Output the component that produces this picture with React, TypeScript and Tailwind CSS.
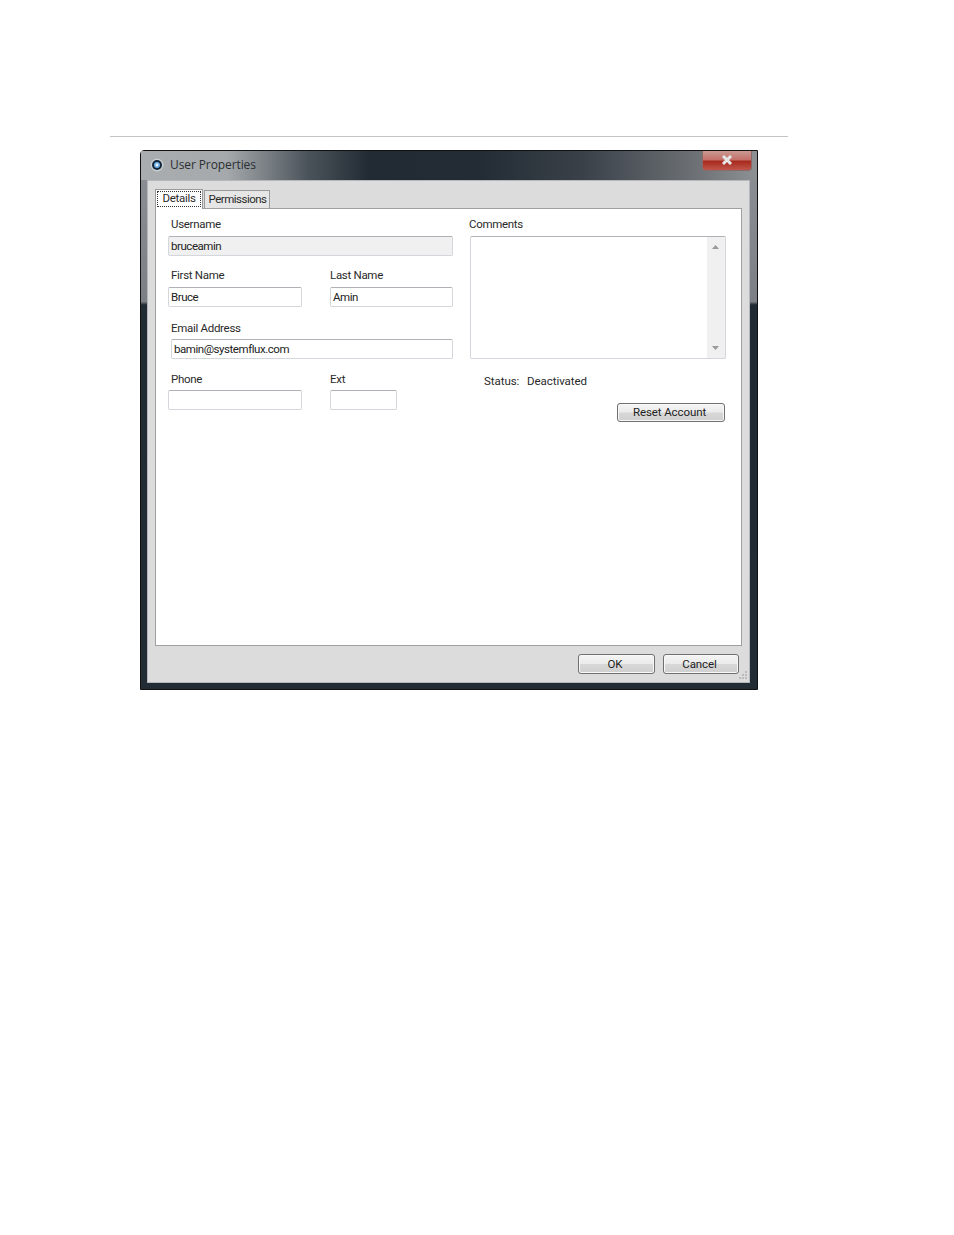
const font = { fontFamily: 'Roboto, "Open Sans", sans-serif' };

function Label({ children, className = '' }: { children: React.ReactNode; className?: string }) {
  return <div className={`h-[14px] text-[11.5px] leading-[14px] tracking-[-0.3px] text-[#2a2a2a] ${className}`}>{children}</div>;
}

function Field({ value = '', className = 'bg-white' }: { value?: string; className?: string }) {
  return (
    <div className={`flex h-[20px] items-center rounded-[2px] border border-[#d3d6da] border-t-[#aeb1b5] pt-[2px] text-[11.5px] tracking-[-0.45px] text-[#222] ${className}`}>
      {value}
    </div>
  );
}

function WinButton({ children, className = '' }: { children: React.ReactNode; className?: string }) {
  return (
    <div className={`flex items-center justify-center rounded-[3px] border border-[#707070] bg-[linear-gradient(#f4f4f4_0%,#ebebeb_48%,#d8d8d8_52%,#cfcfcf_100%)] pr-[3px] pt-[1px] text-[11.5px] tracking-[-0.1px] text-[#222] shadow-[inset_0_0_0_1px_#f8f8f8] ${className}`}>
      {children}
    </div>
  );
}

export default function App() {
  return (
    <div className="h-[1235px] w-[954px] bg-white pt-[136px]" style={font}>
      <div className="ml-[110px] h-px w-[678px] bg-[#c4c4c4]" />

      {/* Dialog window */}
      <div className="ml-[140px] mt-[13px] h-[540px] w-[618px] rounded-tl-[4px] border border-[#111] bg-[linear-gradient(#8d9094_0%,#7c8084_28%,#1f2a33_28.6%,#222c35_100%)]">
        <div className="relative h-[29px] bg-[linear-gradient(90deg,#a9adb0_0%,#a5a9ac_14%,#4c545b_27%,#222b34_37%,#232c35_55%,#3a4149_72%,#6d7175_90%,#8e9194_100%)]">
          <svg className="absolute left-[9px] top-[7px] h-[14px] w-[14px]" viewBox="0 0 14 14">
            <circle cx="7" cy="7" r="6.5" fill="#c9ced3" />
            <circle cx="7" cy="7" r="5" fill="#14263a" />
            <circle cx="7" cy="7" r="3" fill="#6fb0e6" />
            <circle cx="7" cy="7" r="1.4" fill="#e4f1fb" />
          </svg>
          <span className="absolute left-[29px] top-[6px] font-['Open_Sans'] text-[12px] leading-[16px] tracking-[-0.1px] text-[#2b2f33]">User Properties</span>
          <div className="absolute left-[561px] top-0 flex h-[20px] w-[50px] items-center justify-center rounded-b-[4px] border border-t-0 border-[#8a6a68] bg-[linear-gradient(#c99a94_0%,#c4716a_45%,#a92a1e_55%,#c0564c_100%)] pb-[2px]">
            <svg className="h-[10px] w-[12px]" viewBox="0 0 12 10">
              <path d="M2 1 L10 9 M10 1 L2 9" stroke="#e6e6e6" strokeWidth="3" fill="none" />
            </svg>
          </div>
        </div>

        {/* Client area */}
        <div className="relative ml-[6px] h-[503px] w-[603px] border border-[#b4b8bc] bg-[#dcdcdc] pl-[7px] pt-[7px]">
          {/* Tabs */}
          <div className="flex h-[20px] items-end">
            <div className="relative z-10 mb-[-1px] flex h-[20px] w-[48px] justify-center border border-b-0 border-[#9a9a9a] bg-white pt-px">
              <span className="h-[16px] border border-dotted border-[#333] px-[4px] text-[11.5px] leading-[12px] tracking-[-0.3px] text-[#2a2a2a]">Details</span>
            </div>
            <div className="ml-px flex h-[18px] w-[66px] items-center justify-center border border-b-0 border-[#9a9a9a] bg-[#e6e6e6] pl-px text-[11.5px] tracking-[-0.5px] text-[#2a2a2a]">Permissions</div>
          </div>

          {/* Tab panel */}
          <div className="flex h-[438px] w-[587px] border border-[#a0a0a0] bg-white pl-[12px] pt-[8px]">
            <div className="w-[285px]">
              <Label className="ml-[3px]">Username</Label>
              <Field value="bruceamin" className="mt-[5px] w-[285px] bg-[#f0f0f0] pl-[2px]" />
              <div className="mt-[12px] flex gap-[28px]">
                <div>
                  <Label className="ml-[3px]">First Name</Label>
                  <Field value="Bruce" className="mt-[5px] w-[134px] bg-white pl-[2px]" />
                </div>
                <div>
                  <Label>Last Name</Label>
                  <Field value="Amin" className="mt-[5px] w-[123px] bg-white pl-[2px]" />
                </div>
              </div>
              <Label className="ml-[3px] mt-[14px]">Email Address</Label>
              <Field value="bamin@systemflux.com" className="ml-[3px] mt-[4px] w-[282px] bg-white pl-[2px]" />
              <div className="mt-[13px] flex gap-[28px]">
                <div>
                  <Label className="ml-[3px]">Phone</Label>
                  <Field className="mt-[4px] w-[134px] bg-white" />
                </div>
                <div>
                  <Label>Ext</Label>
                  <Field className="mt-[4px] w-[67px] bg-white" />
                </div>
              </div>
            </div>

            <div className="ml-[16px] w-[257px]">
              <Label>Comments</Label>
              <div className="ml-px mt-[5px] flex h-[123px] w-[256px] justify-end rounded-[2px] border border-[#d3d6da] border-t-[#aeb1b5] bg-white">
                <div className="flex w-[18px] flex-col items-center justify-between bg-[#f0f0f0] py-[8px] pr-px">
                  <svg className="h-[4px] w-[7px]" viewBox="0 0 7 4"><path d="M3.5 0 L7 4 H0 Z" fill="#9a9a9a" /></svg>
                  <svg className="h-[4px] w-[7px]" viewBox="0 0 7 4"><path d="M0 0 H7 L3.5 4 Z" fill="#9a9a9a" /></svg>
                </div>
              </div>
              <div className="ml-[15px] mt-[16px] flex h-[14px] items-center text-[11.5px] tracking-[-0.05px] text-[#2a2a2a]">
                <span className="w-[43px]">Status:</span>
                <span>Deactivated</span>
              </div>
              <div className="mt-[14px] flex justify-end pr-[1px]">
                <WinButton className="h-[19px] w-[108px]">Reset Account</WinButton>
              </div>
            </div>
          </div>

          {/* Footer buttons */}
          <div className="ml-[423px] mt-[8px] flex gap-[8px]">
            <WinButton className="h-[20px] w-[77px]">OK</WinButton>
            <WinButton className="h-[20px] w-[76px]">Cancel</WinButton>
          </div>

          {/* Resize grip */}
          <svg className="absolute bottom-[2px] right-[1px] h-[10px] w-[10px]" viewBox="0 0 10 10" fill="#bcbcbc">
            <rect x="7" y="1" width="2" height="2" />
            <rect x="4" y="4" width="2" height="2" />
            <rect x="7" y="4" width="2" height="2" />
            <rect x="1" y="7" width="2" height="2" />
            <rect x="4" y="7" width="2" height="2" />
            <rect x="7" y="7" width="2" height="2" />
          </svg>
        </div>
      </div>
    </div>
  );
}
